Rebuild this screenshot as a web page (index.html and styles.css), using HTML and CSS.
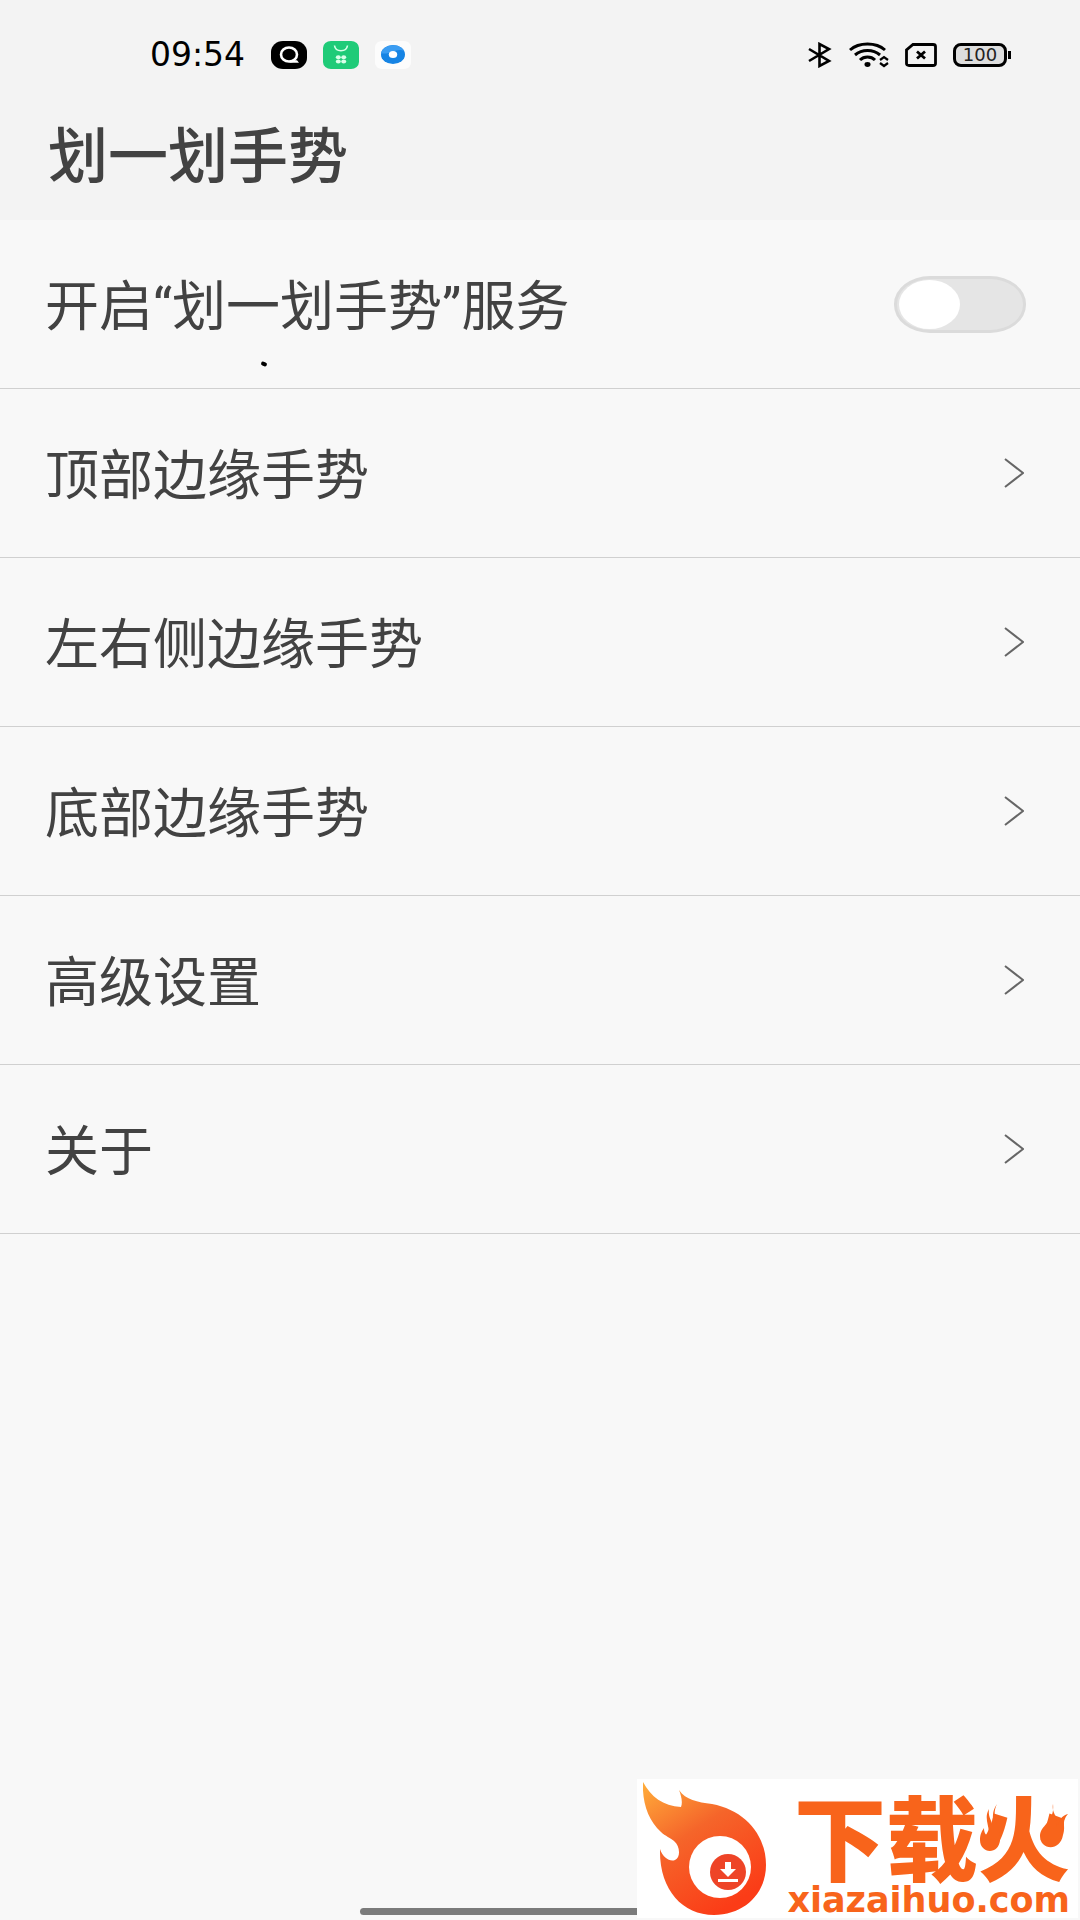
FILE: index.html
```html
<!DOCTYPE html>
<html lang="zh-CN">
<head>
    <meta charset="UTF-8">
    <meta name="viewport" content="width=device-width, initial-scale=1.0">
    <title>划一划手势</title>
    <link rel="stylesheet" href="styles.css">
</head>
<body>
    <header class="header">
        <div class="status-bar">
            <div class="status-left">
                <span class="clock">09:54</span>
                <svg class="app-icon" viewBox="0 0 36 28">
                    <rect width="36" height="28" rx="12" ry="11" fill="#000"/>
                    <ellipse cx="18" cy="13.500" rx="8" ry="7" fill="none" stroke="#fff" stroke-width="2.600"/>
                    <path d="M18 21.800h10l-2-2.600h-4" fill="#fff"/>
                </svg>
                <svg class="app-icon" viewBox="0 0 36 28">
                    <rect width="36" height="28" rx="8" ry="7" fill="#1fcb78"/>
                    <path d="M11.500 4.500c1 7 12 7 13 0" fill="none" stroke="#d9ffe9" stroke-width="1.600"/>
                    <g fill="#d9ffe9">
                        <ellipse cx="15.300" cy="16.300" rx="2.500" ry="2"/>
                        <ellipse cx="20.700" cy="16.300" rx="2.500" ry="2"/>
                        <ellipse cx="15.300" cy="20.600" rx="2.500" ry="2"/>
                        <ellipse cx="20.700" cy="20.600" rx="2.500" ry="2"/>
                    </g>
                </svg>
                <svg class="app-icon" viewBox="0 0 36 28">
                    <rect width="36" height="28" rx="7" ry="6" fill="#fcfcfc"/>
                    <ellipse cx="18" cy="13.500" rx="12" ry="9.500" fill="#1684e4"/>
                    <path d="M6 12C9 2 26 2 29 10 22 6 14 15 6 12z" fill="#3b9df2"/>
                    <ellipse cx="18" cy="13.500" rx="4.200" ry="3.500" fill="#fff"/>
                </svg>
            </div>
            <div class="status-right">
                <svg width="26" height="26" viewBox="0 0 24 26" fill="none" stroke="#000" stroke-width="2.600">
                    <path d="M1 7l20 12-9.500 5V2L21 7 1 19"/>
                </svg>
                <svg width="40" height="26" viewBox="0 0 40 26" fill="none" stroke="#000">
                    <path d="M1 8C10 0 27 0 36 8M6 13c7-6 18-6 25 0M11 18c4-4 11-4 15 0" stroke-width="3"/>
                    <ellipse cx="18.500" cy="22.500" rx="3" ry="2.400" fill="#000" stroke="none"/>
                    <path d="M31 18l4-3 4 3M31 21l4 3 4-3" stroke-width="2.200"/>
                </svg>
                <svg width="32" height="24" viewBox="0 0 32 24" fill="none" stroke="#000">
                    <path d="M8 1.500h20q2.500 0 2.500 2v17q0 2-2.500 2H4q-2.500 0-2.500-2V7z" stroke-width="2.800"/>
                    <path d="M12 8.500l8 7m0-7l-8 7" stroke-width="2.800"/>
                </svg>
                <span class="battery">100</span>
            </div>
        </div>
        <h1>划一划手势</h1>
    </header>

    <main class="settings">
        <div class="row switch-row">
            <label class="row-text" for="service">开启“划一划手势”服务</label>
            <input type="checkbox" id="service" class="switch" role="switch">
            <span class="speck"></span>
        </div>
        <a class="row" href="#top-edge">
            <span class="row-text">顶部边缘手势</span>
            <svg class="chevron" viewBox="0 0 20 30"><path d="M1 1l18 14L1 29"/></svg>
        </a>
        <a class="row" href="#side-edge">
            <span class="row-text">左右侧边缘手势</span>
            <svg class="chevron" viewBox="0 0 20 30"><path d="M1 1l18 14L1 29"/></svg>
        </a>
        <a class="row" href="#bottom-edge">
            <span class="row-text">底部边缘手势</span>
            <svg class="chevron" viewBox="0 0 20 30"><path d="M1 1l18 14L1 29"/></svg>
        </a>
        <a class="row" href="#advanced">
            <span class="row-text">高级设置</span>
            <svg class="chevron" viewBox="0 0 20 30"><path d="M1 1l18 14L1 29"/></svg>
        </a>
        <a class="row" href="#about">
            <span class="row-text">关于</span>
            <svg class="chevron" viewBox="0 0 20 30"><path d="M1 1l18 14L1 29"/></svg>
        </a>
    </main>

    <div class="home-bar"></div>

    <div class="watermark">
        <svg class="flame" viewBox="0 0 124 134">
            <defs>
                <linearGradient id="fire" x1="0" y1="0" x2="0.600" y2="1">
                    <stop offset="0" stop-color="#ffae3b"/>
                    <stop offset="0.450" stop-color="#f5652a"/>
                    <stop offset="1" stop-color="#fb3c17"/>
                </linearGradient>
            </defs>
            <path d="M0 0C8 15 20 24 38 25 40 20 38 13 36 8 43 18 54 20 69 22 101 28 123 52 123 83 123 112 101 133 71 133 39 133 16 107 17 67 20 76 27 80 32 78 38 75 37 64 31 59 28 56 22 54 18 50 5 38-1 20 0 0z" fill="url(#fire)"/>
            <circle cx="77" cy="85" r="31" fill="#fff"/>
            <circle cx="85" cy="90" r="18" fill="#ee4427"/>
            <path d="M82 80h6v7h5l-8 8-8-8h5zM75 97h20v3H75z" fill="#fff"/>
        </svg>
        <div class="brand">
            <span class="brand-name">下载火</span>
            <span class="brand-url">xiazaihuo.com</span>
        </div>
        <svg class="spark spark-left" viewBox="0 0 20 48"><path d="M17 0C10 14 21 23 20 36 19 51 0 50 0 36 0 30 2 27 4 24 4 29 6 32 8 30 11 24 3 15 9 5 8 13 11 15 12 20 14 14 11 8 17 0z"/></svg>
        <svg class="spark spark-right" viewBox="0 0 28 44"><path d="M13 0C11 11 20 12 16 23 21 19 18 13 28 10 21 18 26 22 23 31 20 48 0 46 0 32 0 21 15 18 13 0z"/></svg>
    </div>
</body>
</html>
```
FILE: styles.css
```css
* {
    box-sizing: border-box;
    margin: 0;
    padding: 0;
}

body {
    position: relative;
    min-height: 100vh;
    font-family: Roboto, "Noto Sans CJK SC", sans-serif;
    background: #f8f8f8;
    color: #424242;
    overflow-x: hidden;
}

.header {
    height: 220px;
    background: #f3f3f3;
}

.status-bar {
    display: flex;
    justify-content: space-between;
    align-items: center;
    height: 110px;
    padding: 0 69px 0 150px;
}

.status-left,
.status-right {
    display: flex;
    align-items: center;
    gap: 16px;
}

.clock {
    margin-right: 10px;
    font-family: "DejaVu Sans", sans-serif;
    font-size: 33px;
    line-height: 40px;
    color: #000;
}

.app-icon {
    width: 36px;
    height: 28px;
}

.battery {
    position: relative;
    width: 54px;
    height: 24px;
    margin-right: 4px;
    border: 3px solid #000;
    border-radius: 8px;
    background: #dedede;
    font-family: "DejaVu Sans", sans-serif;
    font-size: 18px;
    line-height: 18px;
    text-align: center;
    color: #222;
}

.battery::after {
    content: "";
    position: absolute;
    top: 5px;
    right: -7px;
    width: 3px;
    height: 8px;
    background: #000;
}

h1 {
    padding: 4px 48px 0;
    font-size: 60px;
    font-weight: 500;
    line-height: 88px;
}

.row {
    position: relative;
    display: flex;
    justify-content: space-between;
    align-items: center;
    height: 169px;
    padding: 0 56px 0 45px;
    border-bottom: 1px solid #d0d0d0;
    font-size: 54px;
    line-height: 80px;
    color: #424242;
    text-decoration: none;
}

.switch-row {
    padding-right: 54px;
}

.row-text {
    padding-top: 8px;
}

.switch {
    position: relative;
    appearance: none;
    width: 132px;
    height: 57px;
    border: 3px solid #dbdbdb;
    border-radius: 36px / 28px;
    background: #e5e5e5;
    cursor: pointer;
}

.switch::before {
    content: "";
    position: absolute;
    top: 1px;
    left: 2px;
    width: 61px;
    height: 49px;
    border-radius: 50%;
    background: #fff;
}

.switch:checked {
    background: #1fcb78;
}

.switch:checked::before {
    left: 63px;
}

.speck {
    position: absolute;
    top: 142px;
    left: 261px;
    width: 6px;
    height: 4px;
    border-radius: 2px;
    background: #000;
    transform: rotate(20deg);
}

.chevron {
    width: 20px;
    height: 30px;
    fill: none;
    stroke: #666;
    stroke-width: 2;
}

.home-bar {
    position: absolute;
    bottom: 5px;
    left: 33.3333%;
    width: 33.3333%;
    height: 7px;
    border-radius: 4px;
    background: #7b7b7b;
}

/* site logo over the bottom corner */
.watermark {
    position: absolute;
    right: 2px;
    bottom: 2px;
    display: flex;
    width: 441px;
    height: 139px;
    padding: 3px 8px 3px 6px;
    background: #fff;
    color: #f8641b;
}

.flame {
    flex: none;
    width: 124px;
    height: 134px;
}

.brand {
    flex: 1;
    display: flex;
    flex-direction: column;
    align-items: flex-end;
    padding-top: 6px;
    white-space: nowrap;
}

.brand-name {
    font-family: "Noto Sans CJK SC", sans-serif;
    font-size: 92px;
    font-weight: 900;
    line-height: 92px;
}

.brand-url {
    font-family: "DejaVu Sans", sans-serif;
    font-size: 35px;
    font-weight: bold;
    line-height: 40px;
}

.spark {
    position: absolute;
    fill: #f8641b;
}

.spark-left {
    top: 25px;
    left: 343px;
    width: 20px;
    height: 48px;
}

.spark-right {
    top: 25px;
    right: 10px;
    width: 28px;
    height: 44px;
}
```
